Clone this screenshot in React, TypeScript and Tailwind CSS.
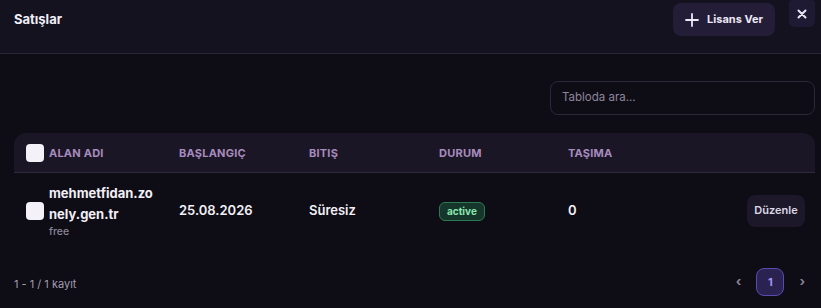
import React from 'react';

const cols = [
  { label: 'BAŞLANGIÇ', w: 'w-[130px]' },
  { label: 'BITIŞ', w: 'w-[130px]' },
  { label: 'DURUM', w: 'w-[129px]' },
  { label: 'TAŞIMA', w: 'flex-1' },
];

const App = () => {
  return (
    <div className="w-[821px] h-[308px] bg-[#0e0c14] text-white relative overflow-hidden" style={{ fontFamily: 'Inter, "Noto Sans", sans-serif' }}>
      {/* header */}
      <div className="h-[54px] bg-[#15121f] border-b border-[#2a2736] flex items-start justify-between pl-[14px] pr-[46px] pt-[3px]">
        <h1 className="text-[13px] font-bold leading-[33px] text-[#f1eef7]">Satışlar</h1>
        <button className="h-[33px] w-[102px] rounded-lg bg-[#231d37] flex items-center justify-center gap-[8px] text-[11px] font-bold text-[#ece8f5]">
          <svg width="14" height="14" viewBox="0 0 14 14" fill="none" stroke="currentColor" strokeWidth="1.8" strokeLinecap="round">
            <path d="M7 1v12M1 7h12" />
          </svg>
          Lisans Ver
        </button>
      </div>
      <button className="absolute top-0 right-[6px] w-[26px] h-[27px] rounded-b-md rounded-t-sm bg-[#1f1a33] flex items-center justify-center text-[#e8e4f2]">
        <svg width="10" height="10" viewBox="0 0 10 10" fill="none" stroke="currentColor" strokeWidth="2" strokeLinecap="round">
          <path d="M1.5 1.5l7 7M8.5 1.5l-7 7" />
        </svg>
      </button>

      {/* body */}
      <div className="pl-[14px] pr-[6px] pt-[27px]">
        <div className="flex justify-end">
          <div className="w-[265px] h-[34px] rounded-lg border border-[#2b2838] bg-[#0e0c14] flex items-center px-[11px] text-[11.5px] text-[#8e879c]">
            Tabloda ara...
          </div>
        </div>

        <div className="mt-[18px]">
          <div className="h-[40px] bg-[#1a1626] rounded-t-xl border-b border-[#2e2a3b] flex items-center text-[11px] font-bold text-[#a88bbd] tracking-[0.02em] pt-[1px]">
            <div className="w-[165px] flex items-center pl-[12px] gap-[5px]">
              <span className="w-[18px] h-[18px] rounded-[4px] bg-[#f4f1f8]" />
              ALAN ADI
            </div>
            {cols.map((c) => (
              <div key={c.label} className={c.w}>{c.label}</div>
            ))}
          </div>

          <div className="h-[75px] flex items-center text-[13px] font-semibold text-[#f2eff7]">
            <div className="w-[165px] flex items-center pl-[12px] gap-[5px]">
              <span className="w-[18px] h-[18px] rounded-[4px] bg-[#f4f1f8] shrink-0" />
              <div className="w-[108px]">
                <div className="leading-[21px] break-all font-bold">mehmetfidan.zonely.gen.tr</div>
                <div className="text-[10.5px] font-medium text-[#8a8496] leading-[14px]">free</div>
              </div>
            </div>
            <div className="w-[130px]">25.08.2026</div>
            <div className="w-[130px]">Süresiz</div>
            <div className="w-[129px]">
              <span className="inline-flex items-center h-[19px] px-[7px] rounded-md border border-[#2e7a50] bg-[#15362a] text-[10px] font-bold text-[#8be6b0]">active</span>
            </div>
            <div className="flex-1">0</div>
            <button className="mr-[10px] w-[58px] h-[32px] rounded-lg bg-[#1c1829] text-[11px] font-semibold text-[#ddd8e8]">Düzenle</button>
          </div>
        </div>

        <div className="mt-[20px] flex items-center justify-between">
          <span className="text-[11px] text-[#a29cae] pt-[4px]">1 - 1 / 1 kayıt</span>
          <div className="flex items-center gap-[15px] pr-[10px] text-[#8a8496]">
            <span className="text-[13px] font-bold">‹</span>
            <span className="w-[28px] h-[28px] rounded-lg border border-[#5a4ab0] bg-[#2a2352] flex items-center justify-center text-[11px] font-bold text-[#a394f2]">1</span>
            <span className="text-[13px] font-bold">›</span>
          </div>
        </div>
      </div>
    </div>
  );
};

export default App;
